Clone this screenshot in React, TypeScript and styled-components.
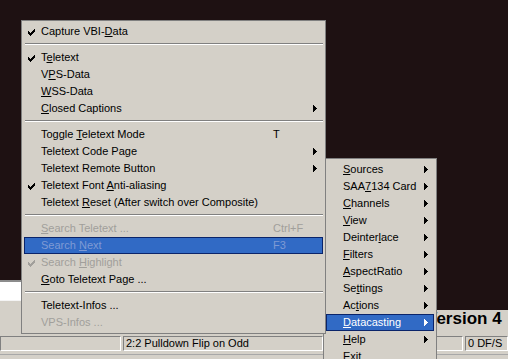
import React from 'react';
import styled, { createGlobalStyle } from 'styled-components';

const GlobalStyle = createGlobalStyle`
  html, body {
    margin: 0;
    padding: 0;
    width: 508px;
    height: 359px;
    overflow: hidden;
    background: #d4d0c8;
    font-family: "Liberation Sans", Arial, sans-serif;
    font-size: 11px;
    color: #000;
  }
`;

type Entry =
  | 'sep'
  | {
      label: string;
      check?: boolean;
      shortcut?: string;
      sub?: boolean;
      disabled?: boolean;
      active?: boolean;
    };

const teletextMenu: Entry[] = [
  { label: 'Capture VBI-&Data', check: true },
  'sep',
  { label: 'T&eletext', check: true },
  { label: 'V&PS-Data' },
  { label: '&WSS-Data' },
  { label: '&Closed Captions', sub: true },
  'sep',
  { label: 'Toggle &Teletext Mode', shortcut: 'T' },
  { label: 'Teletext Code Page', sub: true },
  { label: 'Teletext Remote Button', sub: true },
  { label: 'Teletext Font &Anti-aliasing', check: true },
  { label: 'Teletext &Reset (After switch over Composite)' },
  'sep',
  { label: '&Search Teletext ...', shortcut: 'Ctrl+F', disabled: true },
  { label: 'Search &Next', shortcut: 'F3', disabled: true, active: true },
  { label: 'Search &Highlight', check: true, disabled: true },
  { label: '&Goto Teletext Page ...' },
  'sep',
  { label: 'Teletext-Infos ...' },
  { label: 'VPS-Infos ...', disabled: true },
];

const mainMenu: Entry[] = [
  { label: '&Sources', sub: true },
  { label: 'SAA&7134 Card', sub: true },
  { label: '&Channels', sub: true },
  { label: '&View', sub: true },
  { label: 'Deinter&lace', sub: true },
  { label: '&Filters', sub: true },
  { label: '&AspectRatio', sub: true },
  { label: 'Se&ttings', sub: true },
  { label: 'Ac&tions', sub: true },
  { label: '&Datacasting', sub: true, active: true },
  { label: '&Help', sub: true },
  { label: 'E&xit' },
];

const Window = styled.div`
  display: flex;
  flex-direction: column;
  width: 508px;
  height: 359px;
  position: relative;
`;

const Client = styled.div`
  display: flex;
  height: 335px;
`;

const LeftPane = styled.div`
  width: 420px;
  display: flex;
  flex-direction: column;
`;

const RightPane = styled.div`
  flex: 1;
  display: flex;
  flex-direction: column;
`;

const Video = styled.div<{ $h: number }>`
  height: ${(p) => p.$h}px;
  background: #1e1112;
`;

const EditField = styled.div`
  height: 18px;
  background: #fff;
  border-top: 2px solid #8c8c8c;
  border-bottom: 1px solid #f4f4f4;
`;

const Caption = styled.div`
  padding-left: 6px;
  font-size: 17px;
  font-weight: bold;
  line-height: 18px;
  white-space: nowrap;
`;

const StatusBar = styled.div`
  display: flex;
  flex-direction: column;
  height: 24px;
  padding-top: 1px;
  box-sizing: border-box;
`;

const Panels = styled.div`
  display: flex;
  gap: 2px;
`;

const Panel = styled.div<{ $w?: number }>`
  ${(p) => (p.$w ? `width: ${p.$w}px;` : 'flex: 1;')}
  height: 15px;
  box-sizing: border-box;
  border-top: 1px solid #808080;
  border-left: 1px solid #808080;
  border-bottom: 1px solid #fff;
  border-right: 1px solid #fff;
  padding-left: 2px;
  line-height: 13px;
  white-space: nowrap;
  overflow: hidden;
`;

const BottomEdge = styled.div`
  margin-top: 3px;
  border-top: 1px solid #a8a8a8;
`;

const MenuPanel = styled.div<{ $x: number; $y: number; $w: number; $z: number }>`
  position: absolute;
  left: ${(p) => p.$x}px;
  top: ${(p) => p.$y}px;
  width: ${(p) => p.$w}px;
  z-index: ${(p) => p.$z};
  box-sizing: border-box;
  background: #d4d0c8;
  border: 1px solid #808080;
  padding: 2px;
`;

const MenuRow = styled.div<{ $cols: string; $active?: boolean; $disabled?: boolean }>`
  display: grid;
  grid-template-columns: ${(p) => p.$cols};
  height: 17px;
  box-sizing: border-box;
  border: 1px solid ${(p) => (p.$active ? '#0a246a' : 'transparent')};
  background: ${(p) => (p.$active ? '#316ac5' : 'transparent')};
  color: ${(p) =>
    p.$active ? (p.$disabled ? '#7f9ad4' : '#fff') : p.$disabled ? '#a19f9b' : '#000'};
  line-height: 15px;
  white-space: nowrap;
`;

const CheckCell = styled.div`
  padding: 5px 0 0 3px;
  line-height: 0;
`;

const ArrowCell = styled.div`
  padding-top: 4px;
  line-height: 0;
`;

const Separator = styled.div`
  height: 9px;
  box-sizing: border-box;
  padding: 3px 0 0 1px;

  &::after {
    content: '';
    display: block;
    border-top: 1px solid #808080;
    border-bottom: 1px solid #fff;
  }
`;

const CheckMark = () => (
  <svg width="7" height="7" viewBox="0 0 7 7" shapeRendering="crispEdges">
    <path
      d="M0 2h1v3H0zM1 3h1v3H1zM2 4h1v3H2zM3 3h1v3H3zM4 2h1v3H4zM5 1h1v3H5zM6 0h1v3H6z"
      fill="currentColor"
    />
  </svg>
);

const SubArrow = () => (
  <svg width="4" height="7" viewBox="0 0 4 7" shapeRendering="crispEdges">
    <path d="M0 0h1v7H0zM1 1h1v5H1zM2 2h1v3H2zM3 3h1v1H3z" fill="currentColor" />
  </svg>
);

// "&" marks the accelerator letter, drawn underlined
const Label = ({ text }: { text: string }) => {
  const i = text.indexOf('&');
  if (i < 0) return <span>{text}</span>;
  return (
    <span>
      {text.slice(0, i)}
      <u>{text[i + 1]}</u>
      {text.slice(i + 2)}
    </span>
  );
};

const Menu = ({
  items,
  x,
  y,
  w,
  z,
  cols,
}: {
  items: Entry[];
  x: number;
  y: number;
  w: number;
  z: number;
  cols: string;
}) => (
  <MenuPanel $x={x} $y={y} $w={w} $z={z}>
    {items.map((it, idx) =>
      it === 'sep' ? (
        <Separator key={idx} />
      ) : (
        <MenuRow key={idx} $cols={cols} $active={it.active} $disabled={it.disabled}>
          <CheckCell>{it.check && <CheckMark />}</CheckCell>
          <Label text={it.label} />
          <span>{it.shortcut}</span>
          <ArrowCell>{it.sub && <SubArrow />}</ArrowCell>
        </MenuRow>
      )
    )}
  </MenuPanel>
);

export default function App() {
  return (
    <>
      <GlobalStyle />
      <Window>
        <Client>
          <LeftPane>
            <Video $h={280} />
            <EditField />
          </LeftPane>
          <RightPane>
            <Video $h={310} />
            <Caption>Version 4</Caption>
          </RightPane>
        </Client>
        <StatusBar>
          <Panels>
            <Panel $w={121} />
            <Panel $w={200}>2:2 Pulldown Flip on Odd</Panel>
            <Panel $w={138} />
            <Panel>0 DF/S</Panel>
          </Panels>
          <BottomEdge />
        </StatusBar>

        <Menu items={mainMenu} x={323} y={158} w={114} z={1} cols="16px 81px 0 9px" />
        <Menu items={teletextMenu} x={21} y={20} w={305} z={2} cols="16px 232px 40px 9px" />
      </Window>
    </>
  );
}
